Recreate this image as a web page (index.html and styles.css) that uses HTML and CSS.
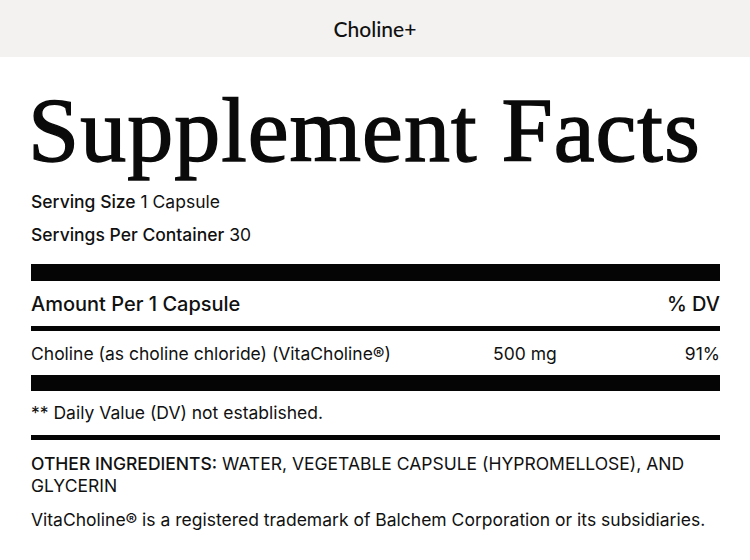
FILE: index.html
```html
<!DOCTYPE html>
<html>
<head>
<meta charset="utf-8">
<link rel="stylesheet" href="styles.css">
</head>
<body>
<header class="topbar">Choline+</header>
<main class="facts">
  <h1 class="title">Supplement Facts</h1>
  <div class="serving"><b>Serving Size</b> 1 Capsule</div>
  <div class="serving second"><b>Servings Per Container</b> 30</div>
  <div class="bar"></div>
  <div class="row head">
    <span class="name">Amount Per 1 Capsule</span>
    <span class="amt"></span>
    <span class="dv">% DV</span>
  </div>
  <div class="rule"></div>
  <div class="row item">
    <span class="name">Choline (as choline chloride) (VitaCholine®)</span>
    <span class="amt">500 mg</span>
    <span class="dv">91%</span>
  </div>
  <div class="bar bar2"></div>
  <div class="note">** Daily Value (DV) not established.</div>
  <div class="rule"></div>
  <p class="ingredients"><b>OTHER INGREDIENTS:</b> WATER, VEGETABLE CAPSULE (HYPROMELLOSE), AND GLYCERIN</p>
  <p class="tm">VitaCholine® is a registered trademark of Balchem Corporation or its subsidiaries.</p>
</main>
</body>
</html>
```
FILE: styles.css
```css
html, body {
  margin: 0;
  padding: 0;
  background: #ffffff;
}
body {
  font-family: Inter, "Liberation Sans", sans-serif;
  color: #111111;
  width: 750px;
}
.topbar {
  height: 57px;
  background: #f3f2f0;
  display: flex;
  align-items: center;
  justify-content: center;
  font-family: Lato, "Open Sans", sans-serif;
  font-size: 21px;
  font-weight: 500;
  color: #111;
}
.facts {
  padding: 0 30px 0 31px;
}
.title {
  margin: 27px 0 0 -3px;
  font-family: "Liberation Serif", serif;
  font-weight: 400;
  font-size: 92px;
  line-height: 92px;
  letter-spacing: 1px;
  -webkit-text-stroke: 1.4px #0a0a0a;
  color: #0a0a0a;
}
.serving {
  margin-top: 14px;
  font-size: 17.5px;
  line-height: 24px;
}
.serving.second {
  margin-top: 9px;
}
.serving b, .ingredients b {
  font-weight: 500;
}
.bar {
  margin-top: 17px;
  height: 17px;
  background: #050505;
}
.bar2 {
  margin-top: 0;
  height: 16px;
}
.row {
  display: grid;
  grid-template-columns: 462px 1fr auto;
  line-height: 24px;
}
.row.head {
  padding: 11px 0 10px;
  font-size: 20px;
  font-weight: 500;
}
.row.item {
  padding: 11px 0 9px;
  font-size: 17.5px;
}
.dv {
  text-align: right;
}
.rule {
  height: 5px;
  background: #050505;
}
.note {
  padding: 10px 0 10px;
  font-size: 17.5px;
  line-height: 24px;
}
.ingredients {
  margin: 13px 0 0;
  font-size: 17.5px;
  line-height: 22px;
}
.tm {
  margin: 12px 0 0;
  font-size: 17.5px;
  line-height: 22px;
}
```
